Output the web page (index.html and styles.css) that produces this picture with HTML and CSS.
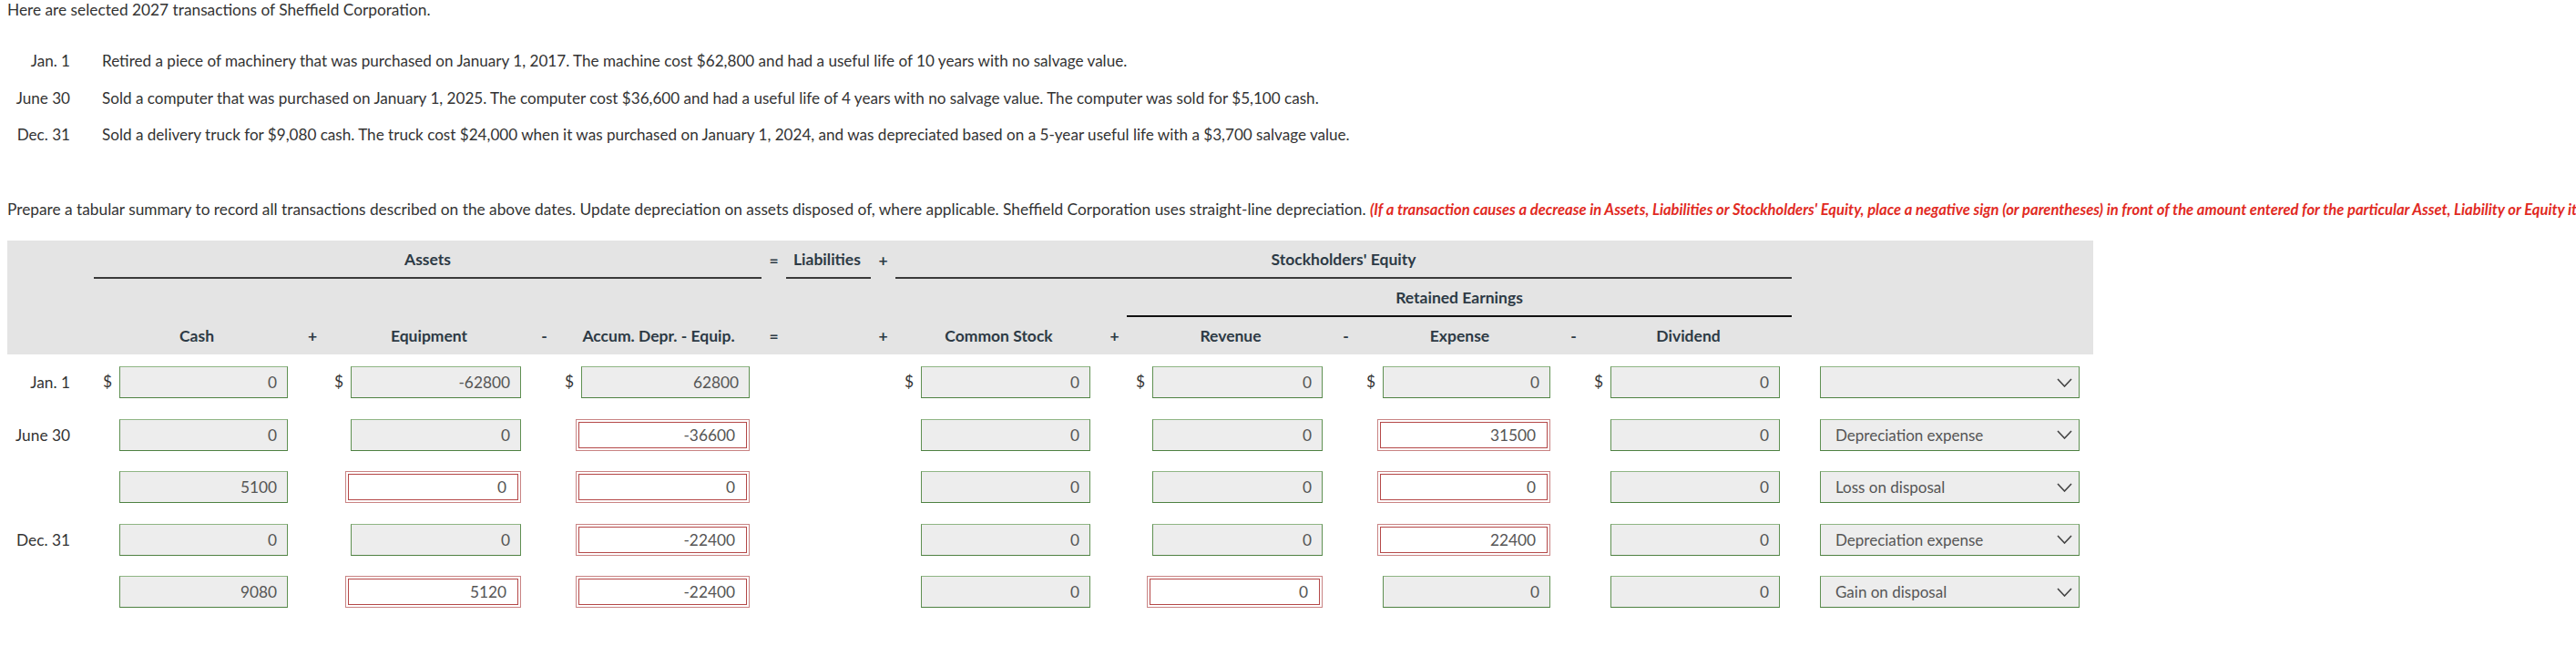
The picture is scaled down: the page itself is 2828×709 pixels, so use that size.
FILE: index.html
```html
<!DOCTYPE html>
<html lang="en">
<head>
<meta charset="utf-8">
<title>Sheffield Corporation – tabular summary</title>
<link rel="stylesheet" href="styles.css">
</head>
<body>
<p class="intro">Here are selected 2027 transactions of Sheffield Corporation.</p>

<div class="txns">
  <span class="txn-date">Jan. 1</span>
  <span class="txn-desc">Retired a piece of machinery that was purchased on January 1, 2017. The machine cost $62,800 and had a useful life of 10 years with no salvage value.</span>
  <span class="txn-date">June 30</span>
  <span class="txn-desc">Sold a computer that was purchased on January 1, 2025. The computer cost $36,600 and had a useful life of 4 years with no salvage value. The computer was sold for $5,100 cash.</span>
  <span class="txn-date">Dec. 31</span>
  <span class="txn-desc">Sold a delivery truck for $9,080 cash. The truck cost $24,000 when it was purchased on January 1, 2024, and was depreciated based on a 5-year useful life with a $3,700 salvage value.</span>
</div>

<p class="instructions">Prepare a tabular summary to record all transactions described on the above dates. Update depreciation on assets disposed of, where applicable. Sheffield Corporation uses straight-line depreciation. <em class="hint">(If a transaction causes a decrease in Assets, Liabilities or Stockholders' Equity, place a negative sign (or parentheses) in front of the amount entered for the particular Asset, Liability or Equity item that was reduced.)</em></p>

<div class="summary">
  <div class="head">
    <!-- row A -->
    <div class="hc ra c1"></div>
    <div class="hc ra c2"></div>
    <div class="hc ra group assets">Assets</div>
    <div class="hc ra op c8">=</div>
    <div class="hc ra group liab">Liabilities</div>
    <div class="hc ra op c10">+</div>
    <div class="hc ra group equity">Stockholders' Equity</div>
    <div class="hc ra c18"></div>
    <div class="hc ra c19"></div>
    <!-- row B -->
    <div class="hc rbc c1"></div>
    <div class="hc rbc c2"></div>
    <div class="hc rb group re">Retained Earnings</div>
    <div class="hc rbc c18"></div>
    <div class="hc rbc c19"></div>
    <!-- row C -->
    <div class="hc rc c3">Cash</div>
    <div class="hc rc op c4">+</div>
    <div class="hc rc c5">Equipment</div>
    <div class="hc rc op c6">-</div>
    <div class="hc rc c7">Accum. Depr. - Equip.</div>
    <div class="hc rc op c8">=</div>
    <div class="hc rc op c10">+</div>
    <div class="hc rc c11">Common Stock</div>
    <div class="hc rc op c12">+</div>
    <div class="hc rc c13">Revenue</div>
    <div class="hc rc op c14">-</div>
    <div class="hc rc c15">Expense</div>
    <div class="hc rc op c16">-</div>
    <div class="hc rc c17">Dividend</div>
  </div>

  <div class="rows">
    <div class="row">
      <div class="date">Jan. 1</div>
      <div class="val"><span class="cur">$</span><span class="field">0</span></div>
      <div class="op"></div>
      <div class="val"><span class="cur">$</span><span class="field">-62800</span></div>
      <div class="op"></div>
      <div class="val"><span class="cur">$</span><span class="field">62800</span></div>
      <div class="op"></div><div class="liab"></div><div class="op"></div>
      <div class="val"><span class="cur">$</span><span class="field">0</span></div>
      <div class="op"></div>
      <div class="val"><span class="cur">$</span><span class="field">0</span></div>
      <div class="op"></div>
      <div class="val"><span class="cur">$</span><span class="field">0</span></div>
      <div class="op"></div>
      <div class="val"><span class="cur">$</span><span class="field">0</span></div>
      <div class="gap"></div>
      <div class="sel"><span class="select"><span class="select-text"></span><svg class="chev" viewBox="0 0 17 10" width="17" height="10"><polyline points="1,1 8.5,9 16,1"/></svg></span></div>
    </div>

    <div class="row">
      <div class="date">June 30</div>
      <div class="val"><span class="cur"></span><span class="field">0</span></div>
      <div class="op"></div>
      <div class="val"><span class="cur"></span><span class="field">0</span></div>
      <div class="op"></div>
      <div class="val"><span class="cur"></span><span class="field wrong">-36600</span></div>
      <div class="op"></div><div class="liab"></div><div class="op"></div>
      <div class="val"><span class="cur"></span><span class="field">0</span></div>
      <div class="op"></div>
      <div class="val"><span class="cur"></span><span class="field">0</span></div>
      <div class="op"></div>
      <div class="val"><span class="cur"></span><span class="field wrong">31500</span></div>
      <div class="op"></div>
      <div class="val"><span class="cur"></span><span class="field">0</span></div>
      <div class="gap"></div>
      <div class="sel"><span class="select"><span class="select-text">Depreciation expense</span><svg class="chev" viewBox="0 0 17 10" width="17" height="10"><polyline points="1,1 8.5,9 16,1"/></svg></span></div>
    </div>

    <div class="row">
      <div class="date"></div>
      <div class="val"><span class="cur"></span><span class="field">5100</span></div>
      <div class="op"></div>
      <div class="val"><span class="cur"></span><span class="field wrong">0</span></div>
      <div class="op"></div>
      <div class="val"><span class="cur"></span><span class="field wrong">0</span></div>
      <div class="op"></div><div class="liab"></div><div class="op"></div>
      <div class="val"><span class="cur"></span><span class="field">0</span></div>
      <div class="op"></div>
      <div class="val"><span class="cur"></span><span class="field">0</span></div>
      <div class="op"></div>
      <div class="val"><span class="cur"></span><span class="field wrong">0</span></div>
      <div class="op"></div>
      <div class="val"><span class="cur"></span><span class="field">0</span></div>
      <div class="gap"></div>
      <div class="sel"><span class="select"><span class="select-text">Loss on disposal</span><svg class="chev" viewBox="0 0 17 10" width="17" height="10"><polyline points="1,1 8.5,9 16,1"/></svg></span></div>
    </div>

    <div class="row">
      <div class="date">Dec. 31</div>
      <div class="val"><span class="cur"></span><span class="field">0</span></div>
      <div class="op"></div>
      <div class="val"><span class="cur"></span><span class="field">0</span></div>
      <div class="op"></div>
      <div class="val"><span class="cur"></span><span class="field wrong">-22400</span></div>
      <div class="op"></div><div class="liab"></div><div class="op"></div>
      <div class="val"><span class="cur"></span><span class="field">0</span></div>
      <div class="op"></div>
      <div class="val"><span class="cur"></span><span class="field">0</span></div>
      <div class="op"></div>
      <div class="val"><span class="cur"></span><span class="field wrong">22400</span></div>
      <div class="op"></div>
      <div class="val"><span class="cur"></span><span class="field">0</span></div>
      <div class="gap"></div>
      <div class="sel"><span class="select"><span class="select-text">Depreciation expense</span><svg class="chev" viewBox="0 0 17 10" width="17" height="10"><polyline points="1,1 8.5,9 16,1"/></svg></span></div>
    </div>

    <div class="row">
      <div class="date"></div>
      <div class="val"><span class="cur"></span><span class="field">9080</span></div>
      <div class="op"></div>
      <div class="val"><span class="cur"></span><span class="field wrong">5120</span></div>
      <div class="op"></div>
      <div class="val"><span class="cur"></span><span class="field wrong">-22400</span></div>
      <div class="op"></div><div class="liab"></div><div class="op"></div>
      <div class="val"><span class="cur"></span><span class="field">0</span></div>
      <div class="op"></div>
      <div class="val"><span class="cur"></span><span class="field wrong">0</span></div>
      <div class="op"></div>
      <div class="val"><span class="cur"></span><span class="field">0</span></div>
      <div class="op"></div>
      <div class="val"><span class="cur"></span><span class="field">0</span></div>
      <div class="gap"></div>
      <div class="sel"><span class="select"><span class="select-text">Gain on disposal</span><svg class="chev" viewBox="0 0 17 10" width="17" height="10"><polyline points="1,1 8.5,9 16,1"/></svg></span></div>
    </div>
  </div>
</div>
</body>
</html>
```

FILE: styles.css
```css
:root {
  --cols: 77px 18px 226px 28px 228px 25px 226px 27px 93px 27px 227px 27px 228px 25px 225px 25px 227px 16px 315px;
}

html, body {
  overflow: hidden;
}

body {
  margin: 0;
  padding: 0 8px;
  font-family: Lato, "Noto Sans", sans-serif;
  font-size: 17.3px;
  color: #333;
  background: #fff;
}

.intro {
  margin: 0;
  line-height: 22px;
}

.txns {
  display: grid;
  grid-template-columns: 69px max-content;
  column-gap: 35px;
  row-gap: 16.5px;
  margin-top: 33px;
  line-height: 24px;
  font-size: 17.1px;
}

.txn-date {
  text-align: right;
}

.instructions {
  margin: 59px 0 0;
  line-height: 22px;
  white-space: nowrap;
}

.hint {
  color: #e12a1f;
  font-weight: 700;
  font-size: 16.6px;
}

.summary {
  margin-top: 23px;
  width: 2290px;
}

.head {
  display: grid;
  grid-template-columns: var(--cols);
  grid-template-rows: 42px 42px 41px;
  background: #e4e4e4;
  color: #2d3a45;
  font-weight: 700;
  font-size: 17.5px;
}

.hc {
  display: flex;
  align-items: center;
  justify-content: center;
  white-space: nowrap;
}

.ra { grid-row: 1; }
.rb { grid-row: 2; }
.rbc { grid-row: 2 / span 2; }
.rc { grid-row: 3; }

.c1 { grid-column: 1; }
.c2 { grid-column: 2; }
.c3 { grid-column: 3; }
.c4 { grid-column: 4; }
.c5 { grid-column: 5; }
.c6 { grid-column: 6; }
.c7 { grid-column: 7; }
.c8 { grid-column: 8; }
.c10 { grid-column: 10; }
.c11 { grid-column: 11; }
.c12 { grid-column: 12; }
.c13 { grid-column: 13; }
.c14 { grid-column: 14; }
.c15 { grid-column: 15; }
.c16 { grid-column: 16; }
.c17 { grid-column: 17; }
.c18 { grid-column: 18; }
.c19 { grid-column: 19; }

.assets { grid-column: 3 / span 5; }
.liab { grid-column: 9; }
.head .liab { justify-content: flex-start; padding-left: 8px; }
.equity { grid-column: 11 / span 7; }
.re { grid-column: 13 / span 5; }

.group {
  border-bottom: 2px solid #3a3a3a;
}

.re {
  border-bottom-color: #111;
}

.rows {
  padding-top: 2px;
}

.row {
  display: grid;
  grid-template-columns: var(--cols);
  height: 57.5px;
  align-items: center;
}

.date {
  grid-column: 1 / span 2;
  text-align: right;
  padding-right: 26px;
  color: #333;
  white-space: nowrap;
}

.row .liab {
  grid-column: auto;
}

.val {
  display: flex;
  align-items: center;
  padding: 0 13px 0 10px;
}

.cur {
  flex: 0 0 18px;
  color: #333;
  margin-top: -3px;
}

.field {
  flex: 1;
  box-sizing: border-box;
  height: 35px;
  display: flex;
  align-items: center;
  justify-content: flex-end;
  padding-right: 11px;
  background: #ededed;
  border: 1px solid #5f9052;
  border-top-color: #8fb584;
  border-bottom-color: #4e8142;
  color: #555;
  font-size: 17.3px;
}

.field.wrong {
  margin-left: -6px;
  padding-right: 15px;
  background: #fff;
  border: 1px solid #c98484;
  box-shadow: inset 0 0 0 2px #fff, inset 0 0 0 3px #b44848;
}

.sel {
  padding: 0 15px;
}

.select {
  box-sizing: border-box;
  height: 35px;
  display: flex;
  align-items: center;
  justify-content: space-between;
  padding: 0 7px 0 16px;
  background: #ededed;
  border: 1px solid #5f9052;
  border-top-color: #8fb584;
  border-bottom-color: #4e8142;
  color: #555;
  font-size: 17px;
}

.chev polyline {
  fill: none;
  stroke: #444;
  stroke-width: 1.6;
}
```
